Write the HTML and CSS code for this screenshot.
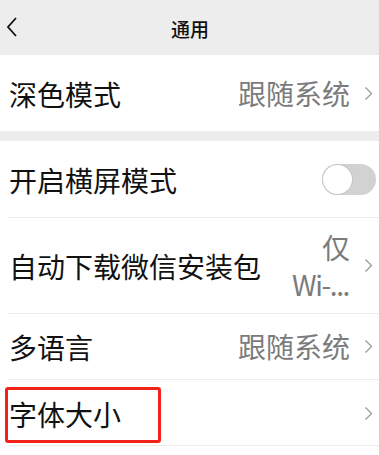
FILE: index.html
```html
<!DOCTYPE html>
<html lang="zh">
<head>
<meta charset="utf-8">
<title>通用</title>
<link rel="stylesheet" href="styles.css">
</head>
<body>
<div class="page">
  <header class="topbar">
    <svg class="back" width="12" height="22" viewBox="0 0 12 22"><polyline points="10,2 2,11 10,20" fill="none" stroke="#111" stroke-width="1.8"/></svg>
    <div class="title">通用</div>
  </header>

  <section class="group">
    <div class="row row-a">
      <span class="label">深色模式</span>
      <span class="right"><span class="value">跟随系统</span><svg class="chev" width="9" height="15" viewBox="0 0 9 15"><polyline points="1.5,1.5 7.5,7.5 1.5,13.5" fill="none" stroke="#9a9a9a" stroke-width="1.3"/></svg></span>
    </div>
  </section>

  <div class="gap"></div>

  <section class="group">
    <div class="row row-a">
      <span class="label">开启横屏模式</span>
      <span class="toggle"><span class="knob"></span></span>
    </div>
    <div class="row row-b divided">
      <span class="label">自动下载微信安装包</span>
      <span class="right"><span class="value stack"><span>仅</span><span class="trunc">Wi-...</span></span><svg class="chev" width="9" height="15" viewBox="0 0 9 15"><polyline points="1.5,1.5 7.5,7.5 1.5,13.5" fill="none" stroke="#9a9a9a" stroke-width="1.3"/></svg></span>
    </div>
    <div class="row row-c divided">
      <span class="label">多语言</span>
      <span class="right"><span class="value">跟随系统</span><svg class="chev" width="9" height="15" viewBox="0 0 9 15"><polyline points="1.5,1.5 7.5,7.5 1.5,13.5" fill="none" stroke="#9a9a9a" stroke-width="1.3"/></svg></span>
    </div>
    <div class="row row-d divided bottom">
      <span class="label">字体大小</span>
      <span class="right"><svg class="chev" width="9" height="15" viewBox="0 0 9 15"><polyline points="1.5,1.5 7.5,7.5 1.5,13.5" fill="none" stroke="#9a9a9a" stroke-width="1.3"/></svg></span>
      <span class="highlight"></span>
    </div>
  </section>
</div>
</body>
</html>
```

FILE: styles.css
```css
* { box-sizing: border-box; }
html, body { margin: 0; padding: 0; }
body {
  background: #ffffff;
  font-family: "Noto Sans CJK SC", "Noto Sans", sans-serif;
  color: #111;
  width: 379px;
  height: 455px;
  overflow: hidden;
}
.page { display: flex; flex-direction: column; }
.topbar {
  height: 55px;
  background: #ededed;
  position: relative;
  display: flex;
  align-items: center;
  justify-content: center;
}
.back { position: absolute; left: 6px; top: 16px; }
.title { font-size: 19px; font-weight: 500; color: #111; margin-top: 1px; margin-left: 1px; }
.group { background: #fff; }
.gap { height: 10px; background: #ededed; }
.row {
  display: flex;
  align-items: center;
  justify-content: space-between;
  padding: 0 6px 0 9px;
  position: relative;
  font-size: 28px;
}
.row-a { height: 76px; }
.row-b { height: 96px; }
.row-c { height: 66px; }
.row-d { height: 67px; }
.divided::before {
  content: "";
  position: absolute;
  left: 8px; right: 0; top: 0;
  border-top: 1px solid #ececec;
}
.bottom::after {
  content: "";
  position: absolute;
  left: 8px; right: 0; bottom: 0;
  border-top: 1px solid #ececec;
}
.label { color: #111; line-height: 1; margin-top: 2px; }
.right { display: flex; align-items: center; gap: 14px; }
.value { color: #7b7b7b; line-height: 1; }
.stack {
  display: flex;
  flex-direction: column;
  align-items: flex-end;
  line-height: 37px;
  margin-top: 2px;
}
.trunc { letter-spacing: -1.4px; margin-right: 1px; }
.chev { display: block; margin-top: 1px; }
.toggle {
  width: 54px;
  height: 31px;
  border-radius: 16px;
  background: #d2d2d2;
  position: relative;
  margin-right: -3px;
  margin-top: 1px;
}
.knob {
  position: absolute;
  left: 1px; top: 1px;
  width: 29px; height: 29px;
  border-radius: 50%;
  background: #fff;
  box-shadow: 0 0 0 1px #c6c6c6;
}
.highlight {
  position: absolute;
  left: 5px;
  top: 8px;
  width: 156px;
  height: 56px;
  border: 3px solid #f3231c;
  border-radius: 3px;
}
```
